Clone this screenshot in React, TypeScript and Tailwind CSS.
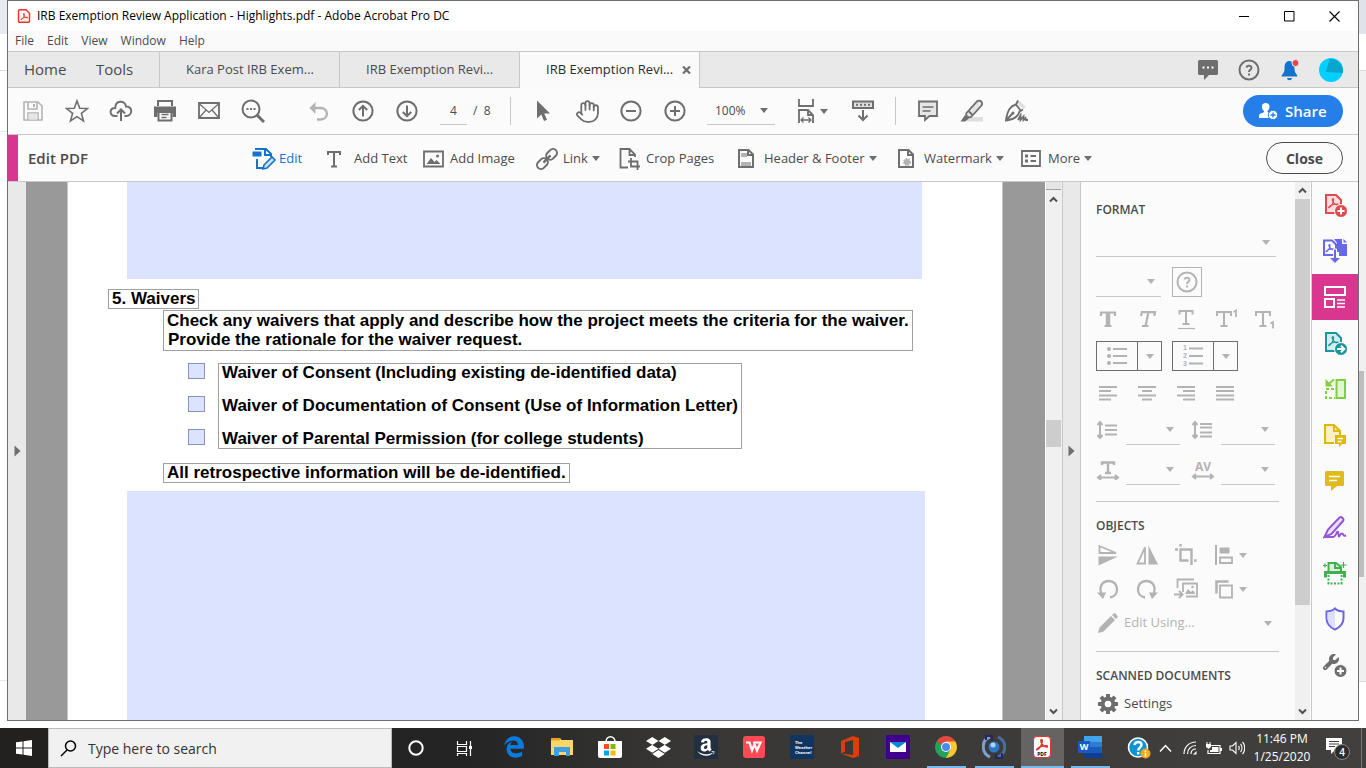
import React, { useState } from "react";
import { FaAmazon, FaDropbox, FaEdgeLegacy, FaWrench } from "react-icons/fa6";
import { Hand } from "lucide-react";

type SvgProps = { w: number; h: number; className?: string; children: React.ReactNode };

function Svg({ w, h, className = "", children }: SvgProps) {
  return (
    <svg width={w} height={h} viewBox={`0 0 ${w} ${h}`} fill="none" stroke="currentColor" strokeWidth={2} className={`shrink-0 ${className}`} aria-hidden="true">
      {children}
    </svg>
  );
}

function Arrow({ className = "" }: { className?: string }) {
  return (
    <svg width="8" height="5" viewBox="0 0 8 5" fill="currentColor" className={`pointer-events-none shrink-0 ${className}`} aria-hidden="true">
      <path d="M0 0h8L4 5z" />
    </svg>
  );
}

function Chevron({ up = false }: { up?: boolean }) {
  return (
    <Svg w={9} h={7} className="text-[#505050]">
      <path d={up ? "M1 5.5 4.5 2 8 5.5" : "M1 1.5 4.5 5 8 1.5"} />
    </Svg>
  );
}

const acroPath = "M1 12c3-1 6-6 6-10 0-1.700-1.700-1.700-1.700 0 0 3 3.500 6.500 6.500 7 1.600.3 1.600-1.500 0-1.500C8 7.500 3 9 1.300 11c-.6.8-.6 1.200-.3 1z";

function SidePlay() {
  return (
    <svg width="7" height="12" viewBox="0 0 7 12" fill="currentColor" className="text-[#6e6e6e]" aria-hidden="true">
      <path d="M0.500 0.500 6.500 6l-6 5.500z" />
    </svg>
  );
}

/* ---------- title bar, menus, document tabs ---------- */

function TitleBar() {
  return (
    <header className="flex h-[30px] items-center bg-white pl-[9px]">
      <Svg w={14} h={16} className="text-[#e8342b]">
        <path d="M2.500 1.700h6.500l3.500 3.500v8.100a1 1 0 0 1-1 1h-9a1 1 0 0 1-1-1V2.700a1 1 0 0 1 1-1z" strokeWidth={1.400} fill="#fff5f4" />
        <path d={acroPath} strokeWidth={1.600} transform="translate(3.500 5) scale(.56)" />
      </Svg>
      <h1 className="ml-[6px] text-[12px] leading-4 text-black">IRB Exemption Review Application - Highlights.pdf - Adobe Acrobat Pro DC</h1>
      <div className="ml-auto flex pr-px text-black">
        <button aria-label="Minimize" className="grid h-[30px] w-[45px] place-items-center">
          <Svg w={11} h={11}><path d="M0 5.500h10" strokeWidth={1} /></Svg>
        </button>
        <button aria-label="Maximize" className="grid h-[30px] w-[45px] place-items-center">
          <Svg w={11} h={11}><path d="M.5.5h9.500v9.500H.5z" strokeWidth={1} /></Svg>
        </button>
        <button aria-label="Close window" className="grid h-[30px] w-[45px] place-items-center">
          <Svg w={11} h={11}><path d="m.5.5 10 10m0-10-10 10" strokeWidth={1.100} /></Svg>
        </button>
      </div>
    </header>
  );
}

function MenuBar() {
  return (
    <nav aria-label="Menu" className="flex h-5 items-center gap-[13px] bg-[#fafafa] pl-[7px] text-[12px] text-[#4b4b4b]">
      {["File", "Edit", "View", "Window", "Help"].map((m) => (
        <button key={m}>{m}</button>
      ))}
    </nav>
  );
}

function TabBar() {
  return (
    <div className="flex h-[37px] border-t border-[#c8c8c8] bg-[#e9e9e9] text-[#4b4b4b]">
      <div className="flex w-[152px] items-center border-r border-b border-[#c8c8c8] pl-4 text-[15px]">
        <button className="w-[72px] text-left">Home</button>
        <button>Tools</button>
      </div>
      <button className="w-[180px] border-r border-b border-[#c8c8c8] pt-px pl-[26px] text-left text-[13px]">Kara Post IRB Exem...</button>
      <button className="w-[180px] border-r border-b border-[#c8c8c8] pt-px pl-[26px] text-left text-[13px]">IRB Exemption Revi...</button>
      <div className="flex w-[180px] items-center border-r border-[#c8c8c8] bg-[#fafafa] pl-[26px] text-[13px] text-[#2c2c2c]">
        <button className="w-[136px] text-left">IRB Exemption Revi...</button>
        <button aria-label="Close tab" className="text-[#6e6e6e]">
          <Svg w={9} h={8}><path d="m1 .5 7 7m0-7-7 7" strokeWidth={2.200} /></Svg>
        </button>
      </div>
      <div className="flex flex-1 items-center justify-end border-b border-[#c8c8c8] pr-[15px] text-[#6e6e6e]">
        <button aria-label="Comments" className="grid w-10 place-items-center">
          <Svg w={22} h={22}>
            <path d="M2.500 1h17A1.500 1.500 0 0 1 21 2.500v12a1.500 1.500 0 0 1-1.500 1.500H12l-5 5v-5H2.500A1.500 1.500 0 0 1 1 14.500v-12A1.500 1.500 0 0 1 2.500 1z" fill="currentColor" stroke="none" />
            <path d="M5.500 8.500h2m2.500 0h2m2.500 0h2" stroke="#fff" />
          </Svg>
        </button>
        <button aria-label="Help" className="grid w-[41px] place-items-center"><HelpIcon /></button>
        <button aria-label="Notifications" className="grid w-[41px] place-items-center">
          <Svg w={20} h={22}>
            <path d="M9 2C5 2.500 4.500 6 4.500 10 4.500 14 2 15 1.500 17.500h16C17 15 14.500 14 14.500 10 14.500 6 14 2.500 9 2zM7 19h5c-.5 3-4.500 3-5 0z" fill="#1473cc" stroke="none" />
            <circle cx="15.500" cy="4" r="3.500" fill="#e34850" stroke="#e9e9e9" strokeWidth={1} />
          </Svg>
        </button>
        <button aria-label="Account" className="ml-[9px]">
          <Svg w={24} h={24}>
            <circle cx="12" cy="12" r="12" fill="#00d0ff" stroke="none" />
            <path d="M10.500 1a12 12 0 0 1 13.200 14L7 14z" fill="#08a5cc" stroke="none" />
          </Svg>
        </button>
      </div>
    </div>
  );
}

function HelpIcon() {
  return (
    <Svg w={22} h={22}>
      <circle cx="11" cy="11" r="9.500" />
      <path d="M8.500 8.500C8.800 6.300 13.500 6 13.500 8.700c0 2-2.500 2.100-2.500 4.300M11 14.500v2" />
    </Svg>
  );
}

/* ---------- main toolbar ---------- */

function ToolButton({ label, children, className = "" }: { label: string; children: React.ReactNode; className?: string }) {
  return (
    <button aria-label={label} className={`grid h-11 w-11 shrink-0 place-items-center ${className}`}>
      {children}
    </button>
  );
}

function Toolbar() {
  const [page, setPage] = useState("4");
  return (
    <div className="flex h-[47px] items-center border-b border-[#c8c8c8] bg-[#fbfbfb] pl-[3px] text-[#6e6e6e]">
      <ToolButton label="Save" className="text-[#b3b3b3]">
        <Svg w={20} h={20}>
          <path d="M1 1h14l4 4v14H1zM5 1v7h9V1M5 19v-7h10v7" strokeWidth={1.600} />
          <path d="M5.500 12.500h9v6h-9z" fill="#e6e6e6" stroke="none" /><path d="M11 3v3" />
        </Svg>
      </ToolButton>
      <ToolButton label="Star">
        <Svg w={24} h={24}><path d="m12 1.800 2.700 7.400 7.800.300-6.100 4.900 2.100 7.600L12 17.700 5.500 22l2.100-7.600L1.500 9.500l7.800-.300z" strokeWidth={1.600} /></Svg>
      </ToolButton>
      <ToolButton label="Upload to cloud">
        <Svg w={24} h={24}>
          <path d="M8.500 17H6c-6 0-6-8 .3-8C6.300 1 16 1 17 7.500c7-.5 7 9.500 0 9.500h-1.500" strokeWidth={1.900} />
          <path d="M12 22V11M8 14.500l4-4 4 4" />
        </Svg>
      </ToolButton>
      <ToolButton label="Print">
        <Svg w={24} h={24}>
          <path d="M5 7V2h14v5" /><path d="M1 7.500h22V18h-3.500v-4h-15v4H1z" fill="currentColor" stroke="none" />
          <path d="M5.500 13v8.500h13V13" /><path d="M8.500 15.500h7m-7 3h5" strokeWidth={1.300} />
        </Svg>
      </ToolButton>
      <ToolButton label="Email">
        <Svg w={24} h={20}><path d="M2 2h20v15H2z" strokeWidth={1.800} /><path d="m2 2.500 10 9 10-9M2 17l7-8m13 8-7-8" strokeWidth={1.300} /></Svg>
      </ToolButton>
      <ToolButton label="Find">
        <Svg w={24} h={24}><circle cx="10" cy="10" r="8.500" /><path d="m16 16 7 7" strokeWidth={3} /><path d="M5.500 10h2m1.500 0h2m1.500 0h2" strokeWidth={1.900} /></Svg>
      </ToolButton>
      <ToolButton label="Undo" className="ml-[22px] text-[#b3b3b3]">
        <Svg w={20} h={22}><path d="M5 8h6.500c8.500 0 8.500 11.500 0 11.500H8" strokeWidth={2.400} /><path d="M6.500 2v12L.5 8z" fill="currentColor" stroke="none" /></Svg>
      </ToolButton>
      <ToolButton label="Previous page">
        <Svg w={22} h={22}><circle cx="11" cy="11" r="9.600" /><path d="M11 16.500V6M6.800 10 11 5.800l4.200 4.200" /></Svg>
      </ToolButton>
      <ToolButton label="Next page">
        <Svg w={22} h={22}><circle cx="11" cy="11" r="9.600" /><path d="M11 5.500V16M6.800 12l4.200 4.200 4.200-4.200" /></Svg>
      </ToolButton>
      <input aria-label="Page number" value={page} onChange={(e) => setPage(e.target.value)} className="ml-[11px] h-[27px] w-[27px] border-b border-[#c8c8c8] bg-transparent text-center text-[12px] text-[#4b4b4b]" />
      <span className="w-[30px] pl-[6px] text-[12px] text-[#4b4b4b]">/&nbsp; 8</span>
      <span className="mr-[10px] ml-[13px] h-7 w-px bg-[#c8c8c8]" />
      <ToolButton label="Select">
        <Svg w={14} h={22}><path d="M1 .5v18l4.300-4.100L8 21l3-1.300-2.800-6.300H14z" fill="currentColor" stroke="none" /></Svg>
      </ToolButton>
      <ToolButton label="Pan"><Hand size={25} strokeWidth={1.700} /></ToolButton>
      <ToolButton label="Zoom out">
        <Svg w={22} h={22}><circle cx="11" cy="11" r="9.600" /><path d="M6 11h10" /></Svg>
      </ToolButton>
      <ToolButton label="Zoom in">
        <Svg w={22} h={22}><circle cx="11" cy="11" r="9.600" /><path d="M6 11h10M11 6v10" /></Svg>
      </ToolButton>
      <div className="ml-[10px] grid h-[27px] w-[68px] shrink-0 items-center border-b border-[#c8c8c8]">
        <select aria-label="Zoom level" className="col-start-1 row-start-1 w-full appearance-none bg-transparent pl-2 text-[12px] text-[#4b4b4b]">
          <option>100%</option>
        </select>
        <Arrow className="col-start-1 row-start-1 mr-[7px] justify-self-end" />
      </div>
      <button aria-label="Fit page" className="ml-[22px] flex items-center gap-[5px]">
        <Svg w={18} h={26}>
          <path d="M2 1v7h14V1M2 25V12h9l5 5v8M11 12v5h5" strokeWidth={1.800} /><path d="M4 22h10M6.500 19.500 4 22l2.500 2.500m5-5L14 22l-2.500 2.500" strokeWidth={1.300} />
        </Svg>
        <Arrow />
      </button>
      <ToolButton label="Read mode" className="ml-[13px]">
        <Svg w={24} h={24}><path d="M2 2.500h20V9H2z" fill="#e0e0e0" /><path d="M5 5.800h2m2 0h2m2 0h2m2 0h2" /><path d="M12 11v10M7.500 16.500 12 21l4.500-4.500" /></Svg>
      </ToolButton>
      <span className="mx-[10px] h-7 w-px bg-[#c8c8c8]" />
      <ToolButton label="Add comment">
        <Svg w={20} h={22}><path d="M1 1.500h18V16h-7.500L7 20v-4H1z" fill="#e6e6e6" strokeWidth={1.800} /><path d="M4.500 7h11m-11 4h8" strokeWidth={1.300} /></Svg>
      </ToolButton>
      <ToolButton label="Highlight">
        <Svg w={24} h={24}>
          <path d="M7 18h16v4.500H5z" fill="#dedede" stroke="none" />
          <path d="M6.500 14 17 2.500c2.500-2.300 6.500.5 4.500 4L11 18c-2 1-6-1-4.500-4zM8.500 12l4 4" fill="#e6e6e6" strokeWidth={1.800} />
          <path d="m5 16-4.500 6.500h4.500l4-3z" fill="currentColor" stroke="none" />
        </Svg>
      </ToolButton>
      <ToolButton label="Sign">
        <Svg w={25} h={24}>
          <path d="M15 1.500 22 8l-3 2-6-6z" fill="#dedede" stroke="none" />
          <path d="m14 1.500-2 4C7 7 3.500 10 2 21.500c8-1 12.500-4 13.500-9l3.500-2M12 5.500l5 6.500M2 21.500l6.500-7" strokeWidth={1.900} />
          <circle cx="9" cy="14" r="1.500" fill="currentColor" stroke="none" />
          <path d="m14 21 2.500-4.500V21l3-3.500V21l2-2 .500 2h2" strokeWidth={1.800} />
        </Svg>
      </ToolButton>
      <button className="mr-[15px] ml-auto flex h-8 w-[100px] items-center rounded-full bg-[#267fe8] pl-4 text-[15px] font-semibold text-white">
        <Svg w={19} h={18}>
          <path d="M6.500 1c5 0 5 5.500 2 8v1l3.500 1.500-1 4.500H0v-2.500C0 11 5 11 5 10V9C2 6.500 2 1 6.500 1z" fill="currentColor" stroke="none" />
          <circle cx="14" cy="13" r="4.700" fill="#fff" stroke="#267fe8" strokeWidth={1} /><path d="M11.500 13h5M14 10.500v5" stroke="#267fe8" strokeWidth={1.300} />
        </Svg>
        <span className="ml-[7px]">Share</span>
      </button>
    </div>
  );
}

/* ---------- edit bar ---------- */

function EditItem({ icon, label, menu = false, className = "" }: { icon: React.ReactNode; label: string; menu?: boolean; className?: string }) {
  return (
    <button className={`flex shrink-0 items-center whitespace-nowrap ${className}`}>
      <span className="w-[27px] shrink-0 text-[#6e6e6e]">{icon}</span>
      {label}
      {menu && <Arrow className="ml-1 text-[#6e6e6e]" />}
    </button>
  );
}

const pageCorner = "M2 2h9.500l4.500 4.500V19H2zM11 2v5h5";

function EditBar() {
  return (
    <div className="flex h-[47px] items-center border-b border-[#c8c8c8] bg-[#fbfbfb] text-[13px] text-[#4b4b4b]">
      <span className="h-full w-[10px] shrink-0 bg-[#d9368f]" />
      <h2 className="ml-[10px] w-[101px] shrink-0 text-[15px] font-semibold">Edit PDF</h2>
      <div className="flex flex-1 justify-center pt-px">
        <EditItem
          className="w-[75px] text-[#1473cc]"
          label="Edit"
          icon={
            <Svg w={25} h={24} className="text-[#1473cc]">
              <path d="M4 3V2h10l5 5v3M13 2v6h6M5 12v9h7" />
              <path d="M.5 4.500h9v5h-9z" fill="currentColor" stroke="none" />
              <path d="m12 18 8-8 3 3-8 8-4 1z" fill="#cfe2f7" strokeWidth={1.600} />
            </Svg>
          }
        />
        <EditItem
          className="w-24"
          label="Add Text"
          icon={<Svg w={14} h={18}><path d="M1 5V2h12v3M7 2v14M4 16.500h6" /></Svg>}
        />
        <EditItem
          className="w-[113px]"
          label="Add Image"
          icon={<Svg w={21} h={18}><path d="M1 1.500h19v15H1z" strokeWidth={1.800} /><path d="m3.500 14 4.500-6 3.500 4 2-2 4 4z" fill="currentColor" stroke="none" /><circle cx="14.500" cy="6" r="1.500" fill="currentColor" stroke="none" /></Svg>}
        />
        <EditItem
          className="w-[83px]"
          label="Link"
          menu
          icon={
            <Svg w={22} h={22}>
              <g transform="rotate(-45 11 11)" strokeWidth={2}>
                <rect x="-1.500" y="7" width="12" height="8" rx="4" /><rect x="11.500" y="7" width="12" height="8" rx="4" /><path d="M6 11h10" strokeWidth={2.400} />
              </g>
            </Svg>
          }
        />
        <EditItem
          className="w-[118px]"
          label="Crop Pages"
          icon={<Svg w={22} h={22}><path d="M9 19.500H1.500V1h9L16 6.500V9M10.500 1v6H16" strokeWidth={1.800} /><path d="M12 10v8.500h9M9 13.500h9.500V22" strokeWidth={1.800} /></Svg>}
        />
        <EditItem
          className="w-40"
          label="Header & Footer"
          menu
          icon={<Svg w={18} h={21}><path d={pageCorner} /><path d="M4 5h6v4H4zM4 14h10v4H4z" fill="#b3b3b3" stroke="none" /></Svg>}
        />
        <EditItem
          className="w-[124px]"
          label="Watermark"
          menu
          icon={<Svg w={18} h={21}><path d={pageCorner} /><circle cx="10" cy="14" r="3" fill="#b3b3b3" stroke="#b3b3b3" strokeDasharray="1.5 1" /></Svg>}
        />
        <EditItem
          className="w-[71px]"
          label="More"
          menu
          icon={<Svg w={20} h={17}><path d="M1 1h18v15H1z" strokeWidth={1.800} /><path d="M4 6h3m-3 5h3" strokeWidth={3} /><path d="M9.500 6H15m-5.500 5H15" /></Svg>}
        />
      </div>
      <button className="mr-[15px] ml-[51px] h-8 w-[77px] shrink-0 rounded-full border border-[#4b4b4b] text-[14px] font-bold">Close</button>
    </div>
  );
}

/* ---------- document ---------- */

const waivers = [
  "Waiver of Consent (Including existing de-identified data)",
  "Waiver of Documentation of Consent (Use of Information Letter)",
  "Waiver of Parental Permission (for college students)",
];

function DocumentPage() {
  return (
    <main className="flex flex-1 bg-[#999] pr-[42px] pl-[41px]">
      <article className="flex flex-1 flex-col items-start border-x border-[#c8c8c8] bg-white text-[17px] leading-5 font-bold text-black [font-family:'Liberation_Sans',Arial,sans-serif]">
        <div className="h-[97px] self-stretch pr-[80px] pl-[59px]">
          <div className="h-full bg-[#dce3ff]" />
        </div>
        <h3 className="mt-[10px] ml-10 border border-[#a0a0a0] px-[3px] leading-[18px]">5. Waivers</h3>
        <p className="mt-px ml-[95px] border border-[#a0a0a0] px-[3px] pb-px leading-[19px]">
          Check any waivers that apply and describe how the project meets the criteria for the waiver.
          <br />
          <span className="pl-px">Provide the rationale for the waiver request.</span>
        </p>
        <div className="mt-3 ml-[120px] flex gap-[13px]">
          <div className="flex flex-col gap-[17px]">
            {waivers.map((w, i) => (
              <input key={w} id={`waiver-${i}`} type="checkbox" className="h-4 w-[17px] appearance-none border border-[#8793bb] bg-[#dce3ff] checked:bg-[#8793bb]" />
            ))}
          </div>
          <div className="flex flex-col gap-[15px] border border-[#a0a0a0] px-[3px] leading-[18px]">
            {waivers.map((w, i) => (
              <label key={w} htmlFor={`waiver-${i}`}>{w}</label>
            ))}
          </div>
        </div>
        <p className="mt-[14px] ml-[95px] border border-[#a0a0a0] px-[3px] leading-[18px]">All retrospective information will be de-identified.</p>
        <div className="mt-2 flex flex-1 self-stretch pr-[77px] pl-[59px]">
          <div className="flex-1 bg-[#dce3ff]" />
        </div>
      </article>
    </main>
  );
}

function DocumentScroll() {
  return (
    <div className="flex w-[18px] flex-col items-center border-x border-r-[#c8c8c8] border-l-white bg-[#f0f0f0] pr-px">
      <span className="h-2 w-full border-b border-[#a0a0a0] bg-[#e4e4e4]" />
      <button aria-label="Scroll up" className="grid h-[18px] place-items-center"><Chevron up /></button>
      <span className="mt-[212px] h-[27px] w-[15px] bg-[#cdcdcd]" />
      <button aria-label="Scroll down" className="mt-auto grid h-[17px] place-items-center"><Chevron /></button>
    </div>
  );
}

/* ---------- format panel ---------- */

function LineSelect({ label, className = "", arrow = "mr-[6px]" }: { label: string; className?: string; arrow?: string }) {
  return (
    <div className={`grid items-center border-b border-[#c8c8c8] ${className}`}>
      <select aria-label={label} disabled className="col-start-1 row-start-1 h-full w-full appearance-none bg-transparent">
        <option />
      </select>
      <Arrow className={`col-start-1 row-start-1 justify-self-end ${arrow}`} />
    </div>
  );
}

function PanelButton({ label, children }: { label: string; children: React.ReactNode }) {
  return <button aria-label={label} className="grid w-6 shrink-0 place-items-center">{children}</button>;
}

const tGlyph = "M4 8V4h14v4M11 4v14M7.500 18h7";

function AlignIcon({ d }: { d: string }) {
  return <Svg w={20} h={16}><path d={d} strokeWidth={1.800} /></Svg>;
}

function ListButton({ label, children }: { label: string; children: React.ReactNode }) {
  return (
    <div className="flex h-[30px] w-[66px] border border-[#6e6e6e]">
      <button aria-label={label} className="grid flex-1 place-items-center">{children}</button>
      <button aria-label={`${label} options`} className="grid w-6 place-items-center border-l border-[#6e6e6e]"><Arrow /></button>
    </div>
  );
}

function SpacingField({ label, children }: { label: string; children: React.ReactNode }) {
  return (
    <div className="flex h-[30px] w-[95px] shrink-0 items-center">
      <span className="grid w-[30px] justify-start">{children}</span>
      <LineSelect label={label} className="h-full w-[54px]" />
    </div>
  );
}

function FormatPanel() {
  return (
    <aside className="w-[214px] shrink-0 bg-[#fbfbfb] pr-4 pl-[15px] text-[#b3b3b3]">
      <h3 className="mt-[18px] h-5 text-[12px] leading-5 font-semibold text-[#4b4b4b]">FORMAT</h3>
      <LineSelect label="Font family" className="h-[37px] w-[180px] pt-2" />
      <div className="mt-[10px] flex h-[30px] gap-[11px]">
        <LineSelect label="Font size" className="w-[65px]" />
        <button aria-label="Font color" className="grid w-[30px] place-items-center border border-[#b3b3b3]">
          <HelpIcon />
        </button>
      </div>
      <div className="flex h-11 items-center gap-[15px]">
        <PanelButton label="Bold"><Svg w={24} h={22}><path d="M5 8V4.500h14V8M8.500 18h7" strokeWidth={2.200} /><path d="M12 4v14" strokeWidth={4.500} /></Svg></PanelButton>
        <PanelButton label="Italic"><Svg w={24} h={22}><path d="M6 8l.8-3.800H20L19.200 8M13.500 4 10.500 18M7 18h6.500" strokeWidth={2.200} /></Svg></PanelButton>
        <PanelButton label="Underline"><Svg w={24} h={22}><path d="M5.500 6.500V3h13v3.500M12 3v13M8.500 16h7" /><path d="M4 20.500h17" strokeWidth={1.200} /></Svg></PanelButton>
        <PanelButton label="Superscript"><Svg w={26} h={22}><path d={tGlyph} /><path d="m20.500 4 2.500-1.500v6.500" strokeWidth={1.800} /></Svg></PanelButton>
        <PanelButton label="Subscript"><Svg w={26} h={22}><path d={tGlyph} /><path d="m18.500 15.500 2.500-1.500v6.500" strokeWidth={1.800} /></Svg></PanelButton>
      </div>
      <div className="flex gap-[10px]">
        <ListButton label="Bulleted list">
          <Svg w={20} h={18}>
            <path d="M6 2h14M6 9h14M6 16h14" strokeWidth={1.800} />
            <g fill="currentColor" stroke="none"><circle cx="2" cy="2" r="2" /><circle cx="2" cy="9" r="2" /><circle cx="2" cy="16" r="2" /></g>
          </Svg>
        </ListButton>
        <ListButton label="Numbered list">
          <div className="flex items-center gap-[2px]">
            <span className="grid text-[7px] leading-[8px] font-bold [font-family:'Liberation_Sans',Arial,sans-serif]"><span>1</span><span>2</span><span>3</span></span>
            <Svg w={14} h={20}><path d="M0 2.500h14M0 10h14M0 17.500h14" strokeWidth={1.800} /></Svg>
          </div>
        </ListButton>
      </div>
      <div className="flex h-11 items-center gap-[15px]">
        <PanelButton label="Align left"><AlignIcon d="M1 2h18M1 6h12M1 10.500h18M1 14.500h12" /></PanelButton>
        <PanelButton label="Align center"><AlignIcon d="M1 2h18M5 6h10M1 10.500h18M5 14.500h10" /></PanelButton>
        <PanelButton label="Align right"><AlignIcon d="M1 2h18M7 6h12M1 10.500h18M7 14.500h12" /></PanelButton>
        <PanelButton label="Justify"><AlignIcon d="M1 2h18M1 6h18M1 10.500h18M1 14.500h18" /></PanelButton>
      </div>
      <div className="flex">
        <SpacingField label="Line spacing">
          <Svg w={22} h={20}><path d="M4 3v14M1.500 5 4 2l2.500 3m-5 10L4 18l2.500-3M9 5.500h12M9 10h12M9 14.500h12" /></Svg>
        </SpacingField>
        <SpacingField label="Paragraph spacing">
          <Svg w={22} h={20}><path d="M4 3v14M1.500 5 4 2l2.500 3m-5 10L4 18l2.500-3M9 4h12M9 7.500h12M9 12.500h12M9 16.500h12" /></Svg>
        </SpacingField>
      </div>
      <div className="mt-[10px] flex">
        <SpacingField label="Horizontal scaling">
          <Svg w={24} h={20}><path d="M6 5V2.500h12V5M12 2v11M9 13h6" strokeWidth={2.400} /><path d="M3 17.500h18M5 15l-3 2.500L5 20m14-5 3 2.500-3 2.500" /></Svg>
        </SpacingField>
        <SpacingField label="Character spacing">
          <span className="grid w-6 justify-items-center">
            <span className="text-[12px] leading-[13px] font-bold">AV</span>
            <Svg w={24} h={7}><path d="M3 3.500h18M5 1 2 3.500 5 6m14-5 3 2.500L19 6" /></Svg>
          </span>
        </SpacingField>
      </div>
      <hr className="mt-4 border-[#c8c8c8]" />
      <h3 className="mt-[14px] h-5 text-[12px] leading-5 font-semibold text-[#4b4b4b]">OBJECTS</h3>
      <div className="mt-[2px] flex h-[34px] items-center gap-[15px]">
        <PanelButton label="Flip vertical"><Svg w={20} h={22}><path d="M1.500 2v7H18z" strokeWidth={1.800} /><path d="M.5 21.500V12.500H20z" fill="currentColor" stroke="none" /></Svg></PanelButton>
        <PanelButton label="Flip horizontal"><Svg w={22} h={20}><path d="M9 2.500v16H1.500z" strokeWidth={1.800} /><path d="M12.500.5V19.500H22z" fill="currentColor" stroke="none" /></Svg></PanelButton>
        <PanelButton label="Crop"><Svg w={22} h={22}><path d="M5.500 0v2.500M0 5.500h3M5.500 4.500V16.500h8M5 5.500h11.500V21M19 16.500h2.500" strokeWidth={2.400} /></Svg></PanelButton>
        <button aria-label="Align objects" className="flex items-center gap-1">
          <Svg w={22} h={20}><path d="M3 0v20" /><path d="M7 3h9v5H7z" fill="currentColor" strokeWidth={1} /><path d="M7 12.500h12v5.500H7z" strokeWidth={1.800} /></Svg>
          <Arrow />
        </button>
      </div>
      <div className="flex h-[34px] items-center gap-[15px]">
        <PanelButton label="Rotate left"><Svg w={22} h={20}><path d="M13 18.500C23 17 22 2 12 2 4 2 2 9 4.500 15.500" strokeWidth={2.300} /><path d="M0 13.500h9L6 20z" fill="currentColor" stroke="none" /></Svg></PanelButton>
        <PanelButton label="Rotate right"><Svg w={22} h={20}><path d="M9 18.500C-1 17 0 2 10 2c8 0 10 7 7.500 13.500" strokeWidth={2.300} /><path d="M22 13.500h-9l3 6.500z" fill="currentColor" stroke="none" /></Svg></PanelButton>
        <PanelButton label="Replace image">
          <Svg w={24} h={22}><path d="M3.500 10V1.500H20M9 14V5.500h14v13H12" strokeWidth={1.800} /><path d="m11 16 3-5 3 3 2-2 2.500 4z" fill="currentColor" stroke="none" /><circle cx="18.500" cy="9" r="1.300" fill="currentColor" stroke="none" /><path d="M0 16.500h8M5 13l3.500 3.500L5 20" /></Svg>
        </PanelButton>
        <button aria-label="Arrange objects" className="flex items-center gap-1">
          <Svg w={22} h={20}><path d="M3.500 14.500V2.500H15.500" strokeWidth={2.600} /><path d="M7 6.500h12v12H7z" strokeWidth={1.800} /></Svg>
          <Arrow />
        </button>
      </div>
      <button className="flex h-[34px] w-full items-center text-[13px]">
        <Svg w={20} h={20} className="mr-[6px] ml-[2px]"><path d="M1.500 14.500 13 3l4 4L5.500 18.500 0 20zM14 2l1.500-1.500c1.500-1 5 2.500 4 4L18 6z" fill="currentColor" stroke="none" /></Svg>
        Edit Using...
        <Arrow className="mr-[7px] ml-auto" />
      </button>
      <hr className="mt-[11px] border-[#c8c8c8]" />
      <h3 className="mt-[14px] h-5 text-[12px] leading-5 font-semibold whitespace-nowrap text-[#4b4b4b]">SCANNED DOCUMENTS</h3>
      <button className="mt-[2px] flex h-8 items-center text-[13px] text-[#4b4b4b]">
        <Svg w={20} h={20} className="mr-[6px] ml-[2px] text-[#6e6e6e]">
          <circle cx="10" cy="10" r="5.300" strokeWidth={4} />
          {[0, 45, 90, 135].map((a) => (
            <path key={a} d="M10 0v4M10 16v4" strokeWidth={4} transform={`rotate(${a} 10 10)`} />
          ))}
        </Svg>
        Settings
      </button>
    </aside>
  );
}

function PanelScroll() {
  return (
    <div className="flex w-4 flex-col items-center border-r border-white bg-[#f0f0f0]">
      <button aria-label="Scroll panel up" className="grid h-[17px] place-items-center"><Chevron up /></button>
      <span className="h-[406px] w-[15px] bg-[#cdcdcd]" />
      <button aria-label="Scroll panel down" className="mt-auto grid h-[17px] place-items-center"><Chevron /></button>
    </div>
  );
}

/* ---------- tool rail ---------- */

const docShape = "M3 2h10l5 5v13H3z";

const railTools: { name: string; icon: React.ReactNode; active?: boolean }[] = [
  {
    name: "Create PDF",
    icon: <Svg w={24} h={24} className="text-[#e34850]"><path d={docShape} fill="#fbdfe0" /><path d={acroPath} strokeWidth={1.500} transform="translate(5 5) scale(.8)" /><circle cx="18" cy="18" r="6.500" fill="currentColor" stroke="#fbfbfb" strokeWidth={1} /><path d="M14.500 18h7M18 14.500v7" stroke="#fff" /></Svg>,
  },
  {
    name: "Export PDF",
    icon: <Svg w={26} h={26} className="text-[#6767e8]"><path d="M2 2.500h8l4 4V17H2z" /><path d="M12 1h8v5h5v12h-8v-4h-2V5z" fill="currentColor" stroke="none" /><path d="m21.500 1 3.500 3.500h-3.500z" fill="currentColor" stroke="none" /><path d={acroPath} strokeWidth={1.800} transform="translate(3.500 6) scale(.65)" /><path d="M11.500 11h3v8.500h4.500l-6 6-6-6h4.500z" fill="currentColor" stroke="#fbfbfb" strokeWidth={1} /></Svg>,
  },
  {
    name: "Edit PDF",
    active: true,
    icon: <Svg w={24} h={24} className="text-white"><path d="M2 2h20v8H2zM2 14h9v8H2z" /><path d="M14 15h8m-8 3.500h8M14 22h8" strokeWidth={1.600} /></Svg>,
  },
  {
    name: "Send PDF",
    icon: <Svg w={24} h={24} className="text-[#1b959a]"><path d={docShape} fill="#d3ecee" /><path d={acroPath} strokeWidth={1.500} transform="translate(5 5) scale(.8)" /><circle cx="18" cy="18" r="6.500" fill="currentColor" stroke="#fbfbfb" strokeWidth={1} /><path d="M14 18h7M18 14.800l3.200 3.200-3.200 3.200" stroke="#fff" /></Svg>,
  },
  {
    name: "Organize Pages",
    icon: <Svg w={22} h={22} className="text-[#7fce3f]"><path d="M12.500 2H21v18h-8.500z" fill="#e3f4d5" /><path d="M10 11H2v9h9" strokeDasharray="3 2" /><path d="M1.500 1v7.500H9z" fill="currentColor" stroke="none" /><path d="m4 6.500 6-5" /></Svg>,
  },
  {
    name: "Combine Files",
    icon: <Svg w={24} h={24} className="text-[#dfb900]"><path d="M11 20H2V2h9l6 6v4" fill="#fbf1c5" /><path d="M11 2v6h6" /><path d="M12 12h11v9h-4l-3 3v-3h-4z" fill="currentColor" stroke="none" /><path d="M14.500 15.500H20m-5.500 3h4" stroke="#fff" strokeWidth={1.300} /></Svg>,
  },
  {
    name: "Comment",
    icon: <Svg w={22} h={22} className="text-[#e0bb1e]"><path d="M2.500 1h16A1.500 1.500 0 0 1 20 2.500v12a1.500 1.500 0 0 1-1.500 1.500H13l-6 5v-5H2.500A1.500 1.500 0 0 1 1 14.500v-12A1.500 1.500 0 0 1 2.500 1z" fill="currentColor" stroke="none" /><path d="M5 6.500h11M5 10.500h8" stroke="#fff" strokeWidth={1.600} /></Svg>,
  },
  {
    name: "Fill & Sign",
    icon: <Svg w={24} h={24} className="text-[#9256d9]"><path d="M1.500 22 5 14.500 16.500 2.500c2-1.500 5 1.500 3.500 3.500L8.500 19z" fill="#ecdff9" /><path d="M1.500 22H10c2 0 4-5 4-5 2-1.500 1 4.500 2 4.500s1-3 3-3 0 3 4 2" /></Svg>,
  },
  {
    name: "Scan & OCR",
    icon: <Svg w={24} h={26} className="text-[#3eb14e]"><path d="M5.500 12V3H13l5 4v5" fill="#d8f0dc" /><path d="M1 11h22v6.500h-3V14H4v3.500H1z" fill="currentColor" stroke="none" /><path d="M5.500 15v8.500h13V15" strokeDasharray="2 1.500" /><path d="M12 3v5h6" /><path d="M20.500 2v6m-3-3h6M2 3.500v4m-2-2h4" strokeWidth={1.200} /></Svg>,
  },
  {
    name: "Protect",
    icon: <Svg w={20} h={24} className="text-[#6767e8]"><path d="M10 1.500C8 3.500 4.500 4.500 1.500 4.500V11c0 6 4 9.500 8.500 11.500 4.500-2 8.500-5.500 8.500-11.500V4.500c-3 0-6.500-1-8.500-3z" /><path d="M10 2.500C8 4.200 5 5.500 2.500 5.500V11c0 5 3.500 9 7.500 10.500z" fill="#dedffa" stroke="none" /></Svg>,
  },
];

function ToolRail() {
  return (
    <nav aria-label="Tools" className="flex w-[47px] flex-col border-l border-[#c8c8c8] bg-[#fbfbfb]">
      {railTools.map((t) => (
        <button key={t.name} aria-label={t.name} className={`grid h-[46px] w-full place-items-center ${t.active ? "bg-[#d9368f]" : ""}`}>
          {t.icon}
        </button>
      ))}
      <button aria-label="More tools" className="grid h-[46px] w-full place-items-center text-[#6e6e6e]">
        <Svg w={24} h={24}>
          <g stroke="none"><FaWrench x={0} y={1} width={19} height={19} /></g>
          <circle cx="17.500" cy="18" r="6.500" fill="currentColor" stroke="#fbfbfb" strokeWidth={1} /><path d="M14 18h7M17.500 14.500v7" stroke="#fff" />
        </Svg>
      </button>
    </nav>
  );
}

/* ---------- taskbar ---------- */

const taskApps: { name: string; icon: React.ReactNode; state?: "open" | "active" }[] = [
  { name: "Microsoft Edge", icon: <FaEdgeLegacy size={22} className="text-[#0a7bdc]" /> },
  {
    name: "File Explorer",
    icon: <Svg w={22} h={20}><path d="M0 1h9l1.500 2H22v15H0z" fill="#ffd667" stroke="none" /><path d="M0 1h9v2.500H0z" fill="#e3a21a" stroke="none" /><path d="M3 19v-9h16v9h-4v-4H8v4z" fill="#3f9de0" stroke="none" /></Svg>,
  },
  {
    name: "Microsoft Store",
    icon: (
      <Svg w={24} h={24}>
        <path d="M0 6h24v15a2 2 0 0 1-2 2H2a2 2 0 0 1-2-2z" fill="#fff" stroke="none" /><path d="M8 7c0-7 9-7 9 0" stroke="#fff" strokeWidth={1.500} />
        <path d="M6 9h5v5H6z" fill="#f25022" stroke="none" /><path d="M12.500 9h5v5h-5z" fill="#7fba00" stroke="none" /><path d="M6 15.500h5v5H6z" fill="#00a4ef" stroke="none" /><path d="M12.500 15.500h5v5h-5z" fill="#ffb900" stroke="none" />
      </Svg>
    ),
  },
  { name: "Dropbox", icon: <FaDropbox size={25} className="text-white" /> },
  { name: "Amazon", icon: <span className="grid size-6 place-items-center bg-[#222f40]"><FaAmazon size={20} className="text-white" /></span> },
  {
    name: "WPS Office",
    icon: <Svg w={22} h={22}><rect width="22" height="22" rx="3" fill="#ff4a55" stroke="none" /><path d="M3 6.500h3.500l2.500 8L11.500 8l2.500 6.500 3.500-8H10" stroke="#fff" strokeWidth={2.200} /></Svg>,
  },
  {
    name: "The Weather Channel",
    icon: <span className="grid size-6 content-end bg-[#103560] pb-1 pl-[5px] text-left text-[4px] leading-[5px] font-bold text-white"><span>The</span><span>Weather</span><span>Channel</span></span>,
  },
  { name: "Office", icon: <Svg w={20} h={22}><path d="M1 5 13 0l6 2v18l-6 2L1 17.500 13 19V4L5 6v9.500L1 17.500z" fill="#dc3e09" stroke="none" /></Svg> },
  { name: "Mail", icon: <Svg w={24} h={24}><path d="M0 0h24v24H0z" fill="#40008d" stroke="none" /><path d="M4 7h16v10H4z" fill="#fff" stroke="none" /><path d="M4 7h16l-8 6z" fill="#0a86d8" stroke="none" /></Svg> },
  {
    name: "Google Chrome",
    state: "open",
    icon: (
      <Svg w={22} h={22}>
        <g stroke="none">
          <path d="M11 11 1.500 5.500a11 11 0 0 1 19 0z" fill="#e04a3f" /><path d="M11 11V5.500h9.500A11 11 0 0 1 11 22z" fill="#fbc92d" /><path d="M11 11v11A11 11 0 0 1 1.500 5.500z" fill="#22a25a" />
          <path d="m6.500 13.500-5-8L11 11zM15.500 13.500 11 22l-1-8z" fill="#22a25a" /><circle cx="11" cy="11" r="5" fill="#fff" /><circle cx="11" cy="11" r="4" fill="#4a8af4" />
        </g>
      </Svg>
    ),
  },
  {
    name: "Sync",
    state: "open",
    icon: <Svg w={24} h={24}><path d="M8 2C-1 5-1 18 8 22" stroke="#7d9fd0" strokeWidth={3} /><path d="M16 2c9 4 9 16 0 20" stroke="#4a6cab" strokeWidth={3} /><path d="M4 5V1h6v5M20 18v5h-6v-4" stroke="#25285f" strokeWidth={2} /><circle cx="12" cy="12" r="5.500" fill="#2f78c8" stroke="none" /><circle cx="11" cy="10" r="2.500" fill="#a8d6f7" stroke="none" /></Svg>,
  },
  {
    name: "Adobe Acrobat",
    state: "active",
    icon: (
      <span className="grid h-[22px] w-[18px] justify-items-center rounded-sm border border-[#e8342b] bg-white pt-[2px] text-[5px] leading-[6px] font-bold text-black">
        <Svg w={12} h={12} className="text-[#e8342b]"><path d={acroPath} strokeWidth={1.600} transform="scale(.9)" /></Svg>PDF
      </span>
    ),
  },
  {
    name: "Word",
    state: "open",
    icon: (
      <span className="grid h-[22px] w-6 items-center">
        <span className="col-start-1 row-start-1 ml-[6px] h-full bg-[linear-gradient(#41a5ee_0_25%,#2b7cd3_25%_50%,#185abd_50%_75%,#103f91_75%)]" />
        <span className="col-start-1 row-start-1 grid h-3 w-3 place-items-center bg-[#185abd] text-[9px] leading-3 font-bold text-white">W</span>
      </span>
    ),
  },
];

function Taskbar() {
  return (
    <footer className="flex h-10 shrink-0 items-stretch bg-[linear-gradient(90deg,#22211f_0%,#242424_34%,#383736_50%,#42403f_100%)] text-white">
      <button aria-label="Start" className="grid w-12 place-items-center">
        <Svg w={16} h={16}><path d="M0 2.300 6.500 1.400V7.500H0zM7.500 1.200 16 0v7.500H7.500zM0 8.500h6.500v6.100L0 13.700zM7.500 8.500H16V16l-8.500-1.200z" fill="#fff" stroke="none" /></Svg>
      </button>
      <label className="flex w-[344px] items-center border border-[#b9b9b9] bg-[#f1f1f1] pl-[11px] text-black">
        <Svg w={17} h={17}><circle cx="10.500" cy="6" r="5" strokeWidth={1.500} /><path d="m7 10-6 6" strokeWidth={1.500} /></Svg>
        <input type="search" aria-label="Search" placeholder="Type here to search" className="ml-[11px] min-w-0 flex-1 bg-transparent text-[14px] outline-none placeholder:text-[#333]" />
      </label>
      <button aria-label="Cortana" className="grid w-12 place-items-center"><Svg w={16} h={16}><circle cx="8" cy="8" r="6.700" strokeWidth={2} /></Svg></button>
      <button aria-label="Task view" className="grid w-12 place-items-center">
        <Svg w={17} h={15}><path d="M1.500 0v3.500h9V0M1.500 5.500h9v5h-9zM1.500 15v-2.500h9V15M14.500 0v15" strokeWidth={1.200} /><path d="M13 5h3v3h-3z" fill="#fff" stroke="none" /></Svg>
      </button>
      <div className="ml-[2px] flex">
        {taskApps.map((a) => (
          <button key={a.name} aria-label={a.name} className="flex w-12 justify-center">
            <span className={`grid h-full place-items-center border-b-2 ${a.state === "active" ? "w-[43px] border-[#76b9ed] bg-[#656463]" : a.state === "open" ? "w-[39px] border-[#76b9ed]" : "w-[39px] border-transparent"}`}>
              {a.icon}
            </span>
          </button>
        ))}
      </div>
      <div className="ml-auto flex items-center">
        <button aria-label="Get help" className="grid w-6 place-items-center">
          <Svg w={24} h={22}><circle cx="11" cy="10.500" r="9.500" fill="#0f94d2" stroke="#fff" strokeWidth={1.600} /><path d="M7.500 8C8 4 14.500 4 14.500 8c0 2.500-3.300 2.500-3.300 5.500M11.200 15v2.500" stroke="#fff" strokeWidth={2.400} /><circle cx="18.500" cy="16.500" r="5" fill="#f5a81c" stroke="none" /><path d="M18.500 13.500V15m0 .8v4" stroke="#fff" strokeWidth={1.600} /></Svg>
        </button>
        <button aria-label="Show hidden icons" className="grid w-[29px] place-items-center"><Svg w={13} h={9}><path d="m1 7.500 5.500-6 5.500 6" strokeWidth={1.500} /></Svg></button>
        <button aria-label="Network" className="grid w-5 place-items-center">
          <Svg w={14} h={14}><path d="M1 13C1 6 6 1 13 1M4.500 13C4.500 8 8 4.500 13 4.500M8 13c0-3 2-5 5-5" strokeWidth={1.200} /><path d="M10 13.500 13.500 10v3.500z" fill="#fff" stroke="none" /></Svg>
        </button>
        <button aria-label="Battery" className="grid w-[26px] place-items-center">
          <Svg w={17} h={13}><path d="M5 3.500h10v8H3V8" strokeWidth={1.200} /><path d="M7 5h6.500v5H5V8h2zM15 6h2v3h-2zM1 2h5v3L3.500 7 1 5z" fill="#fff" stroke="none" /><path d="M2 0v2m3-2v2" strokeWidth={1} /></Svg>
        </button>
        <button aria-label="Volume" className="grid w-[22px] place-items-center">
          <Svg w={16} h={14}><path d="M1 5h2.500L7 1.500v11L3.500 9H1zM9.500 5c1 1 1 3 0 4M11.500 3c2 2 2 6 0 8M13.500 1c3 3 3 9 0 12" strokeWidth={1.100} /></Svg>
        </button>
        <div className="w-[68px] text-center text-[12px] leading-[18px] whitespace-nowrap">
          11:46 PM
          <br />
          1/25/2020
        </div>
        <button aria-label="Notifications, 4 new" className="relative mr-[11px] ml-[10px] grid size-6 place-items-start pt-[2px]">
          <Svg w={17} h={17}><path d="M0 0h16v12H9l-4 4v-4H0z" fill="#fff" stroke="none" /><path d="M3 3.500h10M3 6h10M3 8.500h6" stroke="#42403f" strokeWidth={1} /></Svg>
          <span className="absolute top-2 left-2 grid size-4 place-items-center rounded-full border border-[#888] bg-[#2d2c2c] text-[10px] leading-3 font-semibold">4</span>
        </button>
        <span className="mr-1 h-10 w-px bg-[#777]" />
      </div>
    </footer>
  );
}

/* ---------- background window slivers ---------- */

function LeftSliver() {
  return (
    <div className="flex w-[7px] shrink-0 flex-col bg-white">
      <span className="h-[34px] bg-[#e7eaef]" />
      <span className="h-[37px] border-b border-[#dcdcdc]" />
      <span className="h-[61px] border-b border-[#e8e8e8]" />
      <span className="mb-10 flex-1 border-b border-[#e8e8e8]" />
    </div>
  );
}

function RightSliver() {
  return (
    <div className="flex w-[7px] shrink-0 flex-col bg-white">
      <span className="h-[34px] bg-[#e0e4ea]" />
      <span className="h-[37px] border-b border-[#dcdcdc]" />
      <span className="flex flex-1 flex-col bg-[#f0f0f0] pt-[300px] pr-[2px]">
        <span className="h-[206px] bg-[#bdbdbd]" />
      </span>
      <span className="h-10 border-t border-[#dcdcdc]" />
    </div>
  );
}

export default function App() {
  return (
    <div className="flex min-h-screen flex-col bg-white [font-family:'Open_Sans','Noto_Sans',sans-serif]">
      <div className="flex flex-1">
        <LeftSliver />
        <div className="flex min-w-0 flex-1 flex-col border border-[#6e6e6e]">
          <TitleBar />
          <MenuBar />
          <TabBar />
          <Toolbar />
          <EditBar />
          <div className="flex flex-1">
            <button aria-label="Show navigation pane" className="grid w-[18px] shrink-0 place-items-center bg-[#e9e9e9]"><SidePlay /></button>
            <DocumentPage />
            <DocumentScroll />
            <button aria-label="Hide tools pane" className="grid w-[18px] shrink-0 place-items-center border-r border-[#c8c8c8] bg-[#e9e9e9]"><SidePlay /></button>
            <FormatPanel />
            <PanelScroll />
            <ToolRail />
          </div>
        </div>
        <RightSliver />
      </div>
      <div className="h-[7px]" />
      <Taskbar />
    </div>
  );
}
